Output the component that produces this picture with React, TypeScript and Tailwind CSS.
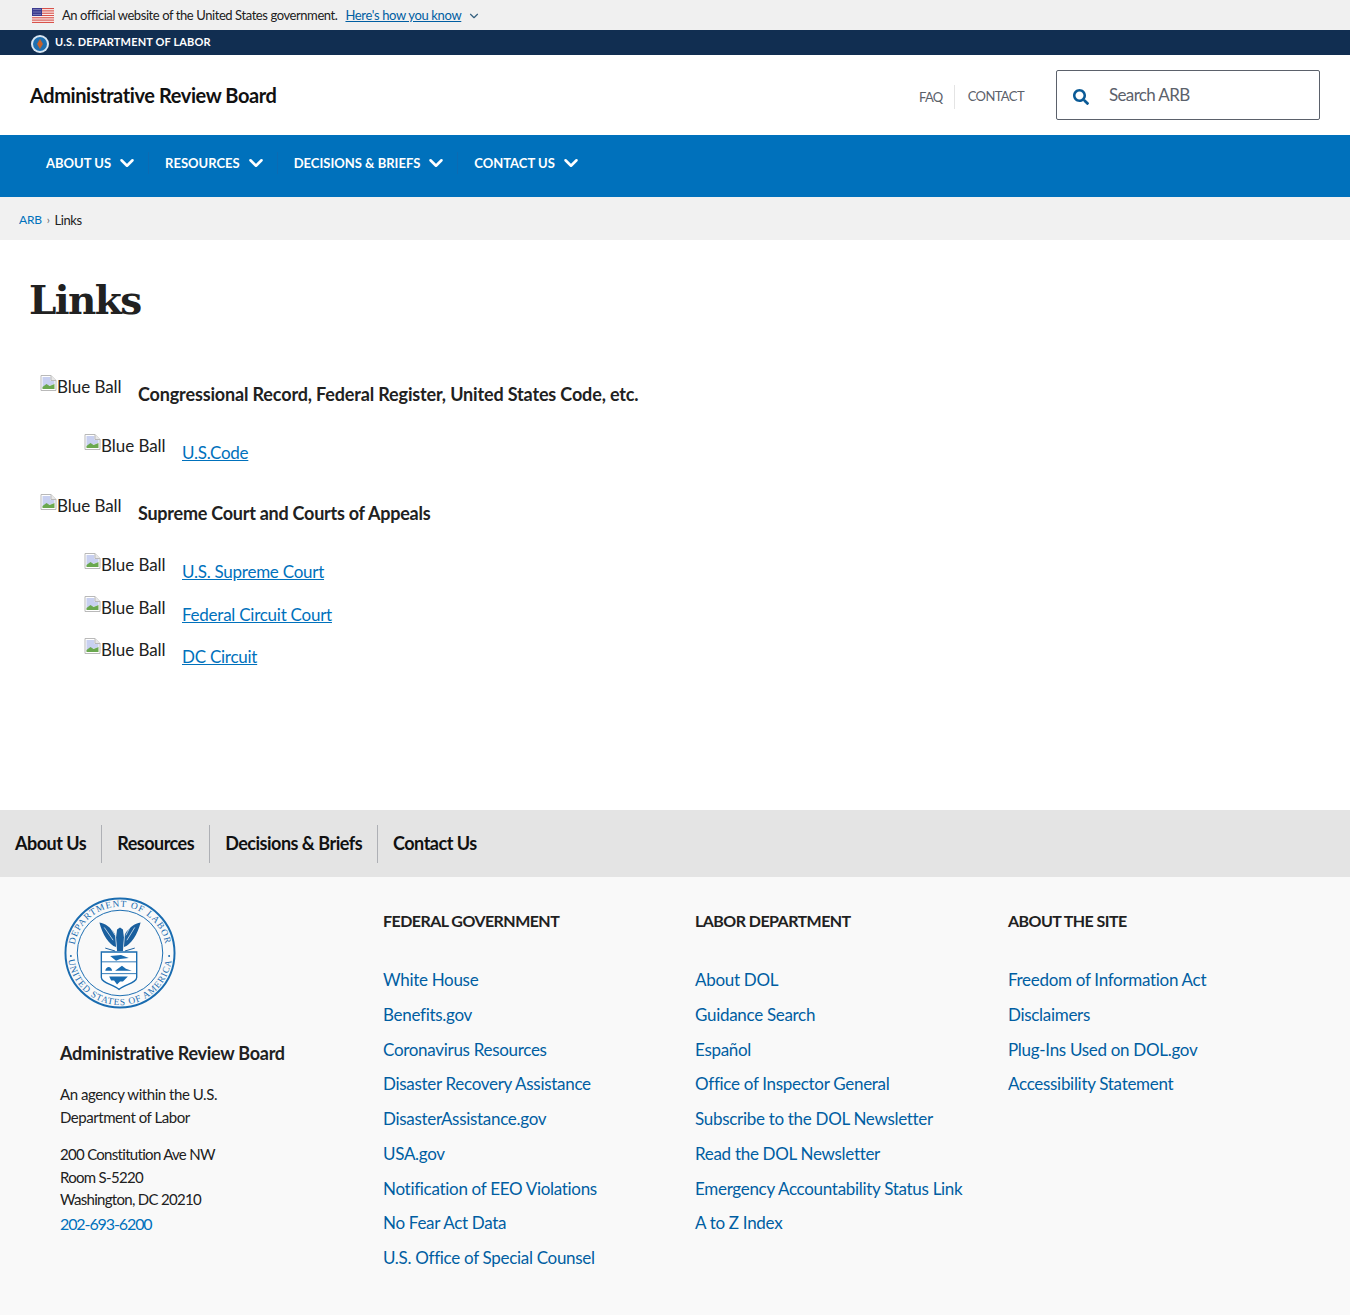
import { ChevronDown } from "lucide-react";
import { FaSearch } from "react-icons/fa";

const FEDERAL = [
  "White House",
  "Benefits.gov",
  "Coronavirus Resources",
  "Disaster Recovery Assistance",
  "DisasterAssistance.gov",
  "USA.gov",
  "Notification of EEO Violations",
  "No Fear Act Data",
  "U.S. Office of Special Counsel",
];
const LABOR = [
  "About DOL",
  "Guidance Search",
  "Español",
  "Office of Inspector General",
  "Subscribe to the DOL Newsletter",
  "Read the DOL Newsletter",
  "Emergency Accountability Status Link",
  "A to Z Index",
];
const SITE = ["Freedom of Information Act", "Disclaimers", "Plug-Ins Used on DOL.gov", "Accessibility Statement"];

function Flag() {
  return (
    <svg width="22" height="15" viewBox="0 0 22 15" className="shrink-0">
      <rect width="22" height="15" fill="#fff" />
      {[0, 2.3, 4.6, 6.9, 9.2, 11.5, 13.8].map((y) => (
        <rect key={y} y={y} width="22" height="1.2" fill="#d8524a" />
      ))}
      <rect width="10" height="8" fill="#3c3b8f" />
      <path d="M1.5 1.5h7M1.5 4h7M1.5 6.5h7" stroke="#c9cbe8" strokeWidth="0.8" strokeDasharray="1 1" />
    </svg>
  );
}

function BrokenImage() {
  return (
    <svg width="17" height="16" viewBox="0 0 16 16" className="shrink-0 mb-auto">
      <path d="M0.5 0.5h10l5 5v10h-15z" fill="#fff" stroke="#b9b9b9" />
      <path d="M2 2h8v4h4v3L2 13z" fill="#c8d0f0" />
      <path d="M2 14v-2l4-3 3 2 5-2v5z" fill="#6aa84f" />
      <path d="M10.5 0.5v5h5" fill="#e8e8e8" stroke="#b9b9b9" />
    </svg>
  );
}

function Alt() {
  return (
    <span className="flex items-start w-[81px] h-[25px] pt-[1px] shrink-0">
      <BrokenImage />
      <span className="text-[17px] leading-[24px] text-[#212121] tracking-[-0.05px] whitespace-nowrap">Blue Ball</span>
    </span>
  );
}

function Seal() {
  return (
    <svg width="112" height="112" viewBox="0 0 114 114" className="block">
      <defs>
        <path id="sealTop" d="M10 57a47 47 0 0 1 94 0" />
        <path id="sealBot" d="M4 57a53 53 0 0 0 106 0" />
      </defs>
      <circle cx="57" cy="57" r="55.5" fill="none" stroke="#1a6cb0" strokeWidth="2" />
      <circle cx="57" cy="57" r="43.5" fill="none" stroke="#1a6cb0" strokeWidth="1" />
      <circle cx="7" cy="60" r="1" fill="#1a6cb0" />
      <circle cx="107" cy="60" r="1" fill="#1a6cb0" />
      <text fontFamily="Liberation Serif, serif" fontSize="9.5" fill="#1a6cb0" letterSpacing="1">
        <textPath href="#sealTop" startOffset="50%" textAnchor="middle">
          DEPARTMENT OF LABOR
        </textPath>
      </text>
      <text fontFamily="Liberation Serif, serif" fontSize="9.5" fill="#1a6cb0" letterSpacing="0.9">
        <textPath href="#sealBot" startOffset="50%" textAnchor="middle">
          UNITED STATES OF AMERICA
        </textPath>
      </text>
      {/* eagle */}
      <path d="M36 26c6 1 12 5 16 12l1 13c-7-2-14-13-17-25zM78 26c-6 1-12 5-16 12l-1 13c7-2 14-13 17-25z" fill="#1a5f9e" />
      <path d="M41 31l9 13M46 29l6 10M72 31l-8 13M68 29l-5 10" stroke="#fff" strokeWidth="0.7" />
      <path d="M54 33l3-2 3 2 1 8-1 14h-6l-1-14z" fill="#1a5f9e" />
      <path d="M42 52l10 3M72 52l-10 3" stroke="#1a5f9e" strokeWidth="1" />
      {/* shield */}
      <path d="M38 56h36v26c0 5-11 7-18 12-7-5-18-7-18-12z" fill="#fff" stroke="#1a6cb0" strokeWidth="1.4" />
      <path d="M38 66h36M38 78h36" stroke="#1a6cb0" strokeWidth="0.9" />
      <path d="M47 60l11-1 8 3-9 1-4 2zM42 75c1-5 6-5 7 0zM52 75l7-5 4 3 6 2zM46 81h19l-5 5h-3l-3 3-3-4h-3z" fill="#1a6cb0" />
    </svg>
  );
}

function FooterCol({ title, links, className }: { title: string; links: string[]; className: string }) {
  return (
    <div className={className}>
      <h3 className="text-[16px] leading-[24px] font-bold text-[#212121] tracking-[-0.55px]">{title}</h3>
      <ul className="mt-[35px]">
        {links.map((l) => (
          <li key={l} className="h-[34.75px] text-[17px] leading-[24px] text-[#005ea2] tracking-[-0.3px]">
            {l}
          </li>
        ))}
      </ul>
    </div>
  );
}

export default function App() {
  const navItems = ["ABOUT US", "RESOURCES", "DECISIONS & BRIEFS", "CONTACT US"];
  const footerNav = ["About Us", "Resources", "Decisions & Briefs", "Contact Us"];

  return (
    <div className="min-h-[1315px] bg-white font-['Lato','Noto_Sans',sans-serif] text-[#212121]">
      {/* gov banner */}
      <div className="h-[30px] bg-[#f0f0f0] pl-[32px] flex items-center text-[13px] tracking-[-0.42px]">
        <Flag />
        <span className="ml-[8px] mt-[2px]">An official website of the United States government.</span>
        <a className="ml-[8px] mt-[2px] text-[#005ea2] underline tracking-[-0.35px]">Here's how you know</a>
        <ChevronDown size={14} strokeWidth={2} className="ml-[6px] mt-[2px] text-[#34607f]" />
      </div>
      <div className="h-[25px] bg-[#112e51] pl-[31px] flex items-center">
        <svg width="18" height="18" viewBox="0 0 18 18" className="mt-[3px]">
          <circle cx="9" cy="9" r="9" fill="#d9e6f2" />
          <circle cx="9" cy="9" r="7" fill="#1e6fb0" />
          <path d="M9 4l3 5-3 5-3-5z" fill="#c4622d" />
        </svg>
        <span className="ml-[6px] text-white text-[11px] font-bold tracking-[0.15px]">U.S. DEPARTMENT OF LABOR</span>
      </div>

      {/* header */}
      <header className="h-[80px] flex items-center pl-[30px] pr-[30px]">
        <span className="-mt-[1px] text-[20px] font-bold tracking-[-0.41px] text-[#111]">Administrative Review Board</span>
        <div className="ml-auto flex items-center text-[13px] text-[#5b616b] tracking-[-0.6px] mt-[4px]">
          <span className="pr-[11px] border-r border-[#e4e4e4] h-[24px] leading-[24px]">FAQ</span>
          <span className="pl-[13px]">CONTACT</span>
        </div>
        <div className="ml-[32px] w-[264px] h-[50px] border border-[#5b616b] rounded-[2px] flex items-center">
          <FaSearch size={16} className="ml-[16px] mt-[4px] text-[#0a5a96]" />
          <span className="ml-[20px] text-[17px] text-[#5b616b] tracking-[-0.65px] -mt-[1px]">Search ARB</span>
        </div>
      </header>

      {/* main nav */}
      <nav className="h-[62px] bg-[#0071bc] pl-[46px] pt-[17px] flex items-start">
        {navItems.map((n) => (
          <div key={n} className="flex items-center h-[22px] pr-[10px] mr-[16px] border-r border-[#0b6bb3] last:border-r-0">
            <span className="mt-[1px] text-white text-[13px] font-bold tracking-[0px]">{n}</span>
            <ChevronDown size={22} strokeWidth={2.8} className="ml-[5px] text-white" />
          </div>
        ))}
      </nav>

      {/* breadcrumb */}
      <div className="h-[43px] bg-[#f1f1f1] pl-[19px] pt-[13px] text-[13px] leading-[20px] tracking-[-0.4px] flex">
        <a className="text-[12px] tracking-[-0.2px] text-[#0071bc]">ARB</a>
        <span className="mx-[5px] text-[#5b616b] text-[11px]">›</span>
        <span>Links</span>
      </div>

      {/* main content */}
      <main className="h-[570px] pl-[30px]">
        <h1 className="pt-[36px] -ml-[1px] text-[39px] leading-[48px] font-bold font-['DejaVu_Serif',serif] tracking-[-1.6px]">Links</h1>
        <div className="mt-[50px] pl-[10px] text-[18px] leading-[24px]">
          <div className="h-[59px] flex">
            <Alt />
            <b className="ml-[17px] pt-[8px] tracking-[-0.15px]">Congressional Record, Federal Register, United States Code, etc.</b>
          </div>
          <div className="h-[60px] flex pl-[44px]">
            <Alt />
            <a className="ml-[17px] pt-[8px] h-[32px] text-[17px] text-[#0071bc] underline tracking-[-0.25px]">U.S.Code</a>
          </div>
          <div className="h-[59px] flex">
            <Alt />
            <b className="ml-[17px] pt-[8px] tracking-[-0.25px]">Supreme Court and Courts of Appeals</b>
          </div>
          {[
            ["U.S. Supreme Court", "h-[43px]"],
            ["Federal Circuit Court", "h-[42px]"],
            ["DC Circuit", "h-[42px]"],
          ].map(([t, h]) => (
            <div key={t} className={`${h} flex pl-[44px]`}>
              <Alt />
              <a className="ml-[17px] pt-[8px] h-[32px] text-[17px] text-[#0071bc] underline tracking-[-0.25px]">{t}</a>
            </div>
          ))}
        </div>
      </main>

      {/* footer nav */}
      <div className="h-[67px] bg-[#e4e4e4] flex items-center pl-[15px]">
        {footerNav.map((n, i) => (
          <span
            key={n}
            className={`h-[38px] leading-[36px] text-[18px] font-bold text-[#111] tracking-[-0.5px] ${
              i < 3 ? "pr-[15px] mr-[15px] border-r border-[#aeb0b5]" : ""
            }`}
          >
            {n}
          </span>
        ))}
      </div>

      {/* footer */}
      <footer className="h-[438px] bg-[#f9f9f9] flex">
        <div className="w-[383px] pl-[60px] pt-[20px] shrink-0">
          <div className="pl-[4px]">
            <Seal />
          </div>
          <div className="mt-[32px] text-[18px] leading-[24px] font-bold tracking-[-0.26px]">Administrative Review Board</div>
          <p className="mt-[18px] text-[15px] leading-[23px] tracking-[-0.45px]">
            An agency within the U.S.
            <br />
            Department of Labor
          </p>
          <p className="mt-[14px] text-[15px] leading-[22.5px] tracking-[-0.7px]">
            200 Constitution Ave NW
            <br />
            Room S-5220
            <br />
            Washington, DC 20210
          </p>
          <p className="text-[16px] leading-[26px] text-[#0071bc] tracking-[-1.1px]">202-693-6200</p>
        </div>
        <FooterCol title="FEDERAL GOVERNMENT" links={FEDERAL} className="w-[312px] pt-[32px] shrink-0" />
        <FooterCol title="LABOR DEPARTMENT" links={LABOR} className="w-[313px] pt-[32px] shrink-0" />
        <FooterCol title="ABOUT THE SITE" links={SITE} className="pt-[32px]" />
      </footer>
    </div>
  );
}
